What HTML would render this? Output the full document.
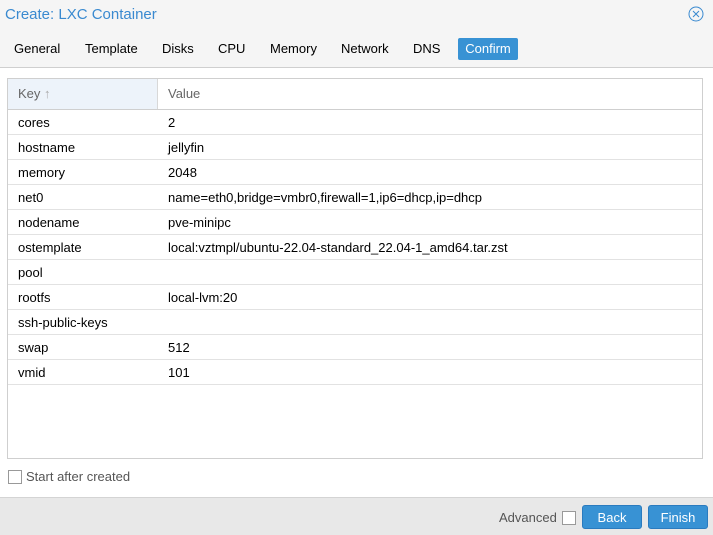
<!DOCTYPE html><html><head><style>
body{margin:0;width:713px;height:534px;background:#fff;font-family:"Liberation Sans",sans-serif;font-size:13px;color:#000;position:relative;overflow:hidden}
.hd{position:absolute;left:0;top:0;width:713px;height:67px;background:#f5f5f5;border-bottom:1px solid #cfcfcf}
.t{position:absolute;left:5px;top:6px;font-size:15px;color:#3a8ad0}
.tab{position:absolute;top:38px;height:22px;line-height:22px;font-size:13px;color:#000}
.grid{position:absolute;left:7px;top:78px;width:694px;height:379px;border:1px solid #cfcfcf}
.gh{height:30px;border-bottom:1px solid #cfcfcf;display:flex;color:#666}
.row{height:24px;border-bottom:1px solid #e2e2e2;display:flex;line-height:25px}
.k{width:150px;padding-left:10px}
.ft{position:absolute;left:0;top:497px;width:713px;height:37px;background:#e8e8e8;border-top:1px solid #d4d4d4}
.btn{position:absolute;top:7px;height:24px;line-height:24px;width:60px;text-align:center;background:#3892d4;color:#fff;border-radius:3px;border:1px solid #2a7bbf;box-sizing:border-box}
.cb{position:absolute;width:12px;height:12px;border:1px solid #999;background:#fff}
</style></head><body>
<div class="hd">
<div class="t">Create: LXC Container</div>
<svg style="position:absolute;left:688px;top:6px" width="16" height="16" viewBox="0 0 16 16"><circle cx="8" cy="8" r="7" fill="none" stroke="#3a8ad0" stroke-width="1"/><path d="M5 5L11 11M11 5L5 11" stroke="#3a8ad0" stroke-width="1"/></svg>
<div class="tab" style="left:14px">General</div>
<div class="tab" style="left:85px">Template</div>
<div class="tab" style="left:162px">Disks</div>
<div class="tab" style="left:218px">CPU</div>
<div class="tab" style="left:270px">Memory</div>
<div class="tab" style="left:341px">Network</div>
<div class="tab" style="left:413px">DNS</div>
<div class="tab" style="left:458px;width:60px;text-align:center;background:#3892d4;color:#fff;border-radius:2px">Confirm</div>
</div>
<div class="grid">
<div class="gh"><div class="k" style="width:139px;background:#edf3fa;border-right:1px solid #d8d8d8;line-height:29px">Key <span style="color:#aaa">↑</span></div><div style="padding-left:10px;line-height:29px">Value</div></div>
<div class="row"><div class="k">cores</div><div>2</div></div>
<div class="row"><div class="k">hostname</div><div>jellyfin</div></div>
<div class="row"><div class="k">memory</div><div>2048</div></div>
<div class="row"><div class="k">net0</div><div>name=eth0,bridge=vmbr0,firewall=1,ip6=dhcp,ip=dhcp</div></div>
<div class="row"><div class="k">nodename</div><div>pve-minipc</div></div>
<div class="row"><div class="k">ostemplate</div><div>local:vztmpl/ubuntu-22.04-standard_22.04-1_amd64.tar.zst</div></div>
<div class="row"><div class="k">pool</div><div></div></div>
<div class="row"><div class="k">rootfs</div><div>local-lvm:20</div></div>
<div class="row"><div class="k">ssh-public-keys</div><div></div></div>
<div class="row"><div class="k">swap</div><div>512</div></div>
<div class="row"><div class="k">vmid</div><div>101</div></div>
</div>
<div class="cb" style="left:8px;top:470px"></div>
<div style="position:absolute;left:26px;top:469px;color:#555">Start after created</div>
<div class="ft">
<div style="position:absolute;left:499px;top:12px;color:#555">Advanced</div>
<div class="cb" style="left:562px;top:13px"></div>
<div class="btn" style="left:582px">Back</div>
<div class="btn" style="left:648px">Finish</div>
</div>
</body></html>
